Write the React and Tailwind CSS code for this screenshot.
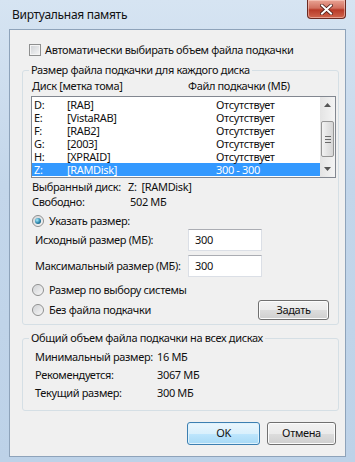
import React from "react";

const drives = [
  { letter: "D:", label: "[RAB]", size: "Отсутствует" },
  { letter: "E:", label: "[VistaRAB]", size: "Отсутствует" },
  { letter: "F:", label: "[RAB2]", size: "Отсутствует" },
  { letter: "G:", label: "[2003]", size: "Отсутствует" },
  { letter: "H:", label: "[XPRAID]", size: "Отсутствует" },
  { letter: "Z:", label: "[RAMDisk]", size: "300 - 300", selected: true },
];

const totals = [
  ["Минимальный размер:", "16 МБ"],
  ["Рекомендуется:", "3067 МБ"],
  ["Текущий размер:", "300 МБ"],
];

const Radio = ({ checked }) => (
  <span className="flex h-[12px] w-[12px] shrink-0 items-center justify-center rounded-full border border-[#8e8f8f] bg-[linear-gradient(135deg,#cfd1d4,#f7f7f7)] shadow-[inset_0_0_1px_#fff]">
    {checked && (
      <span className="h-[6px] w-[6px] rounded-full bg-[radial-gradient(circle_at_35%_35%,#a8ecfb,#2a84ab_55%,#0c3d56)]" />
    )}
  </span>
);

const Button = ({ children, primary, className = "" }) => (
  <button
    type="button"
    className={
      "flex shrink-0 items-center justify-center rounded-[3px] border text-[11px] " +
      (primary
        ? "border-[#3c7fb1] bg-[linear-gradient(#eaf6fd,#d9f0fc_50%,#bee6fd_51%,#a7d9f5)] shadow-[inset_0_0_0_1px_#dff2fc] "
        : "border-[#707070] bg-[linear-gradient(#f2f2f2,#ebebeb_50%,#dddddd_51%,#cfcfcf)] shadow-[inset_0_0_0_1px_#fcfcfc] ") +
      className
    }
  >
    {children}
  </button>
);

const Input = ({ value }) => (
  <div className="flex h-[22px] w-[74px] shrink-0 items-center border border-[#dbdfe6] border-t-[#abadb3] bg-white pl-[6px]">
    {value}
  </div>
);

export default function App() {
  return (
    <div className="flex h-[462px] w-[355px] flex-col overflow-hidden whitespace-nowrap bg-[linear-gradient(#d6e4f2,#c3d6ea_40%,#bdd2e8)] font-['Segoe_UI','Noto_Sans',sans-serif] text-[11px] tracking-[-0.35px] text-[#111]">
      {/* title bar */}
      <div className="flex h-[29px] shrink-0 items-start justify-between pl-[12px]">
        <span className="mt-[6px] text-[12px] leading-[18px] tracking-[-0.3px]">Виртуальная память</span>
        <div className="mr-[9px] flex h-[19px] w-[39px] items-center justify-center rounded-b-[4px] border border-t-0 border-[#6a2a22] bg-[linear-gradient(#e9a394,#d1705f_45%,#b83a28_55%,#d0664e)] shadow-[inset_0_0_0_1px_rgba(255,220,210,0.5)]">
          <svg width="13" height="11" viewBox="0 0 13 11">
            <path
              d="M2 1.5 L11 9.5 M11 1.5 L2 9.5"
              stroke="#4a1c16"
              strokeWidth="3.6"
              strokeLinecap="square"
            />
            <path
              d="M2 1.5 L11 9.5 M11 1.5 L2 9.5"
              stroke="#fff"
              strokeWidth="2"
              strokeLinecap="square"
            />
          </svg>
        </div>
      </div>

      {/* client area */}
      <div className="mx-[9px] mb-[5px] flex flex-1 flex-col border border-[#8ea3ba] bg-[#f0f0f0] pl-[12px] pr-[6px]">
        <label className="mt-[12px] flex h-[16px] items-center gap-[4px] pl-[7px]">
          <span className="h-[12px] w-[12px] shrink-0 border border-[#8e8f8f] bg-[linear-gradient(135deg,#cdd0d4,#f6f6f6)] shadow-[inset_0_0_0_1px_#f4f4f4]" />
          Автоматически выбирать объем файла подкачки
        </label>

        <fieldset className="mt-[4px] rounded-[3px] border border-[#d5dfe5]">
          <legend className="ml-[6px] px-[2px] leading-[16px]">
            Размер файла подкачки для каждого диска
          </legend>
          <div className="pb-[4px] pl-[8px] pr-[2px]">
            <div className="flex h-[16px] items-center pl-[1px]">
              <span className="w-[156px] shrink-0">Диск [метка тома]</span>
              <span>Файл подкачки (МБ)</span>
            </div>

            <div className="mt-[2px] flex h-[82px] border border-[#828790] bg-white">
              <div className="flex-1 pt-[1px]">
                {drives.map((d) => (
                  <div
                    key={d.letter}
                    className={
                      "flex h-[13px] items-center leading-[13px] " +
                      (d.selected ? "bg-[#3399ff] text-white" : "")
                    }
                  >
                    <span className="w-[35px] shrink-0 pl-[2px]">{d.letter}</span>
                    <span className="w-[149px] shrink-0">{d.label}</span>
                    <span>{d.size}</span>
                  </div>
                ))}
              </div>
              <div className="flex w-[15px] shrink-0 flex-col bg-[linear-gradient(90deg,#e4e4e4,#f4f4f4)]">
                <div className="flex h-[16px] items-center justify-center">
                  <svg width="7" height="4" viewBox="0 0 7 4">
                    <path d="M0 4 L3.5 0 L7 4 Z" fill="#555" />
                  </svg>
                </div>
                <div className="mx-[1px] mt-[8px] flex h-[36px] flex-col items-center justify-center gap-[2px] rounded-[2px] border border-[#959595] bg-[linear-gradient(90deg,#f3f3f3,#e3e3e3_50%,#d6d6d6)]">
                  <span className="h-px w-[6px] bg-[#6a6a6a]" />
                  <span className="h-px w-[6px] bg-[#6a6a6a]" />
                  <span className="h-px w-[6px] bg-[#6a6a6a]" />
                </div>
                <div className="mt-auto flex h-[16px] items-center justify-center">
                  <svg width="7" height="4" viewBox="0 0 7 4">
                    <path d="M0 0 L3.5 4 L7 0 Z" fill="#555" />
                  </svg>
                </div>
              </div>
            </div>

            <div className="mt-[2px] flex h-[15px] items-center pl-[1px]">
              <span className="w-[96px] shrink-0">Выбранный диск:</span>
              <span>Z:&nbsp;&nbsp;[RAMDisk]</span>
            </div>
            <div className="flex h-[15px] items-center pl-[1px]">
              <span className="w-[98px] shrink-0">Свободно:</span>
              <span>502 МБ</span>
            </div>

            <div className="mt-[3px] flex h-[16px] items-center gap-[5px] pl-[1px]">
              <Radio checked />
              Указать размер:
            </div>
            <div className="flex h-[22px] items-center pl-[4px]">
              <span className="w-[153px] shrink-0">Исходный размер (МБ):</span>
              <Input value="300" />
            </div>
            <div className="mt-[4px] flex h-[22px] items-center pl-[4px]">
              <span className="w-[153px] shrink-0">Максимальный размер (МБ):</span>
              <Input value="300" />
            </div>
            <div className="mt-[5px] flex h-[16px] items-center gap-[5px] pl-[1px]">
              <Radio />
              Размер по выбору системы
            </div>
            <div className="mt-[2px] flex h-[20px] items-center justify-between pl-[1px] pr-[7px]">
              <span className="flex items-center gap-[5px]">
                <Radio />
                Без файла подкачки
              </span>
              <Button className="h-[20px] w-[71px]">Задать</Button>
            </div>
          </div>
        </fieldset>

        <fieldset className="mt-[5px] rounded-[3px] border border-[#d5dfe5] pb-[8px] pl-[12px]">
          <legend className="-ml-[6px] px-[2px] leading-[16px]">
            Общий объем файла подкачки на всех дисках
          </legend>
          <div className="mt-[2px]">
            {totals.map(([k, v]) => (
              <div key={k} className="flex h-[18px] items-center">
                <span className="w-[122px] shrink-0">{k}</span>
                <span>{v}</span>
              </div>
            ))}
          </div>
        </fieldset>

        <div className="mr-[3px] mt-[11px] flex justify-end gap-[7px]">
          <Button primary className="h-[23px] w-[73px]">
            OK
          </Button>
          <Button className="h-[23px] w-[69px]">Отмена</Button>
        </div>
      </div>
    </div>
  );
}
